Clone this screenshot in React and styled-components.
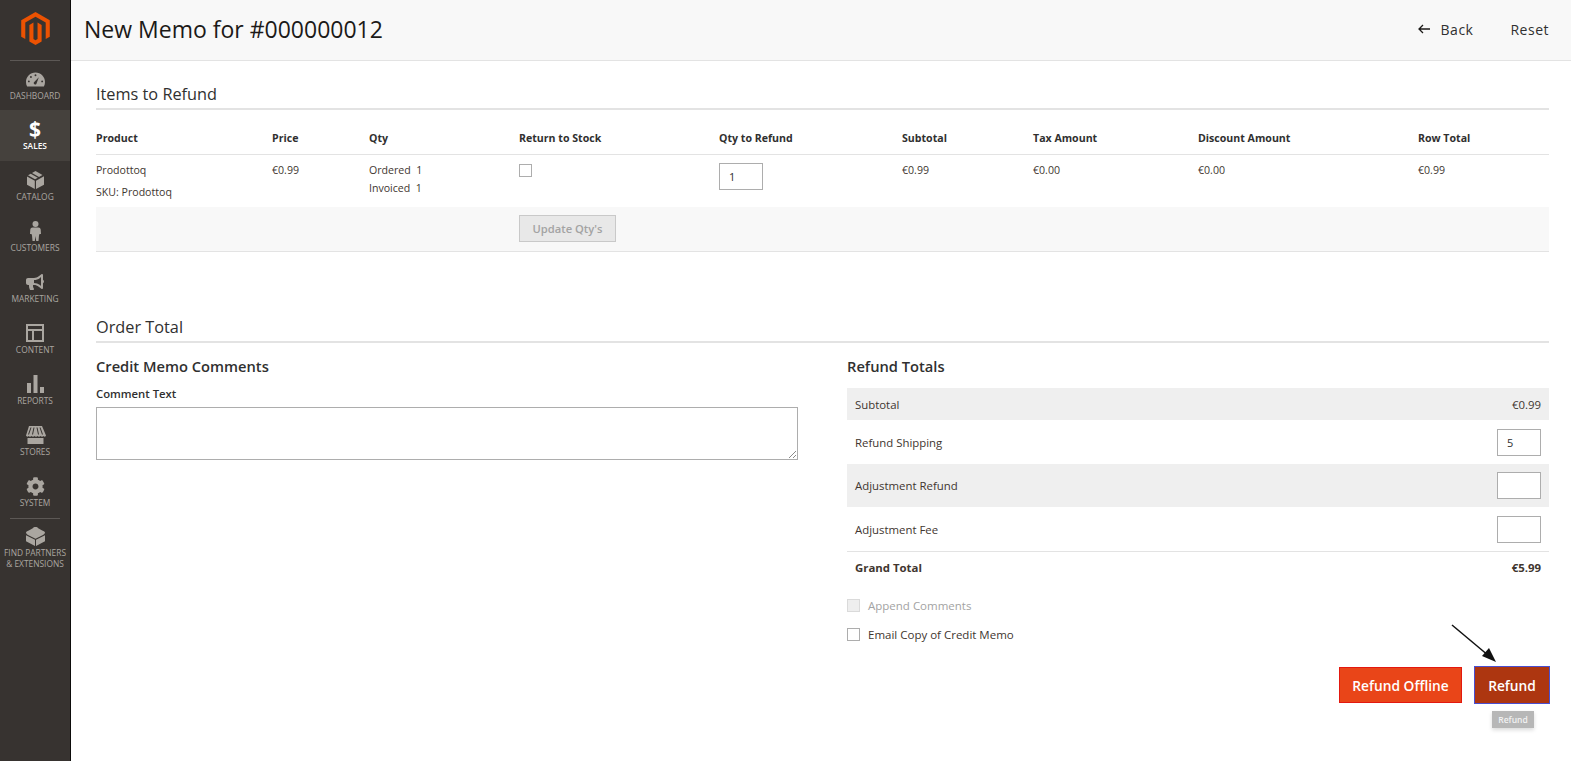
import React from 'react';
import styled, { createGlobalStyle } from 'styled-components';
import { SiMagento } from 'react-icons/si';
import { FaBullhorn, FaCog } from 'react-icons/fa';

const GlobalStyle = createGlobalStyle`
    html, body {
        margin: 0;
        padding: 0;
        background: #fff;
    }
    body {
        font-family: "Open Sans", "Liberation Sans", sans-serif;
        color: #303030;
        overflow: hidden;
    }
`;

const Page = styled.div`
    display: flex;
    height: 761px;
    position: relative;
`;

const Sidebar = styled.nav`
    width: 70px;
    flex: none;
    background: #373330;
    border-right: 1px solid #0d0c0b;
    display: flex;
    flex-direction: column;
    align-items: stretch;
`;

const LogoBox = styled.div`
    height: 60px;
    display: flex;
    justify-content: center;
    align-items: flex-start;
    padding-top: 12px;
    box-sizing: border-box;
    color: #eb5202;
    font-size: 33px;
    svg { display: block; }
`;

const Rule = styled.div`
    height: 1px;
    background: #5c5855;
    margin: 0 10px;
`;

const MenuItem = styled.a`
    height: ${p => p.$height || 51}px;
    box-sizing: border-box;
    display: flex;
    flex-direction: column;
    align-items: center;
    padding-top: ${p => p.$pad || 10}px;
    font-size: 8.4px;
    line-height: ${p => p.$leading || 12}px;
    text-align: center;
    white-space: nowrap;
    color: ${p => (p.$active ? '#ffffff' : '#aaa6a0')};
    background: ${p => (p.$active ? '#45413d' : 'transparent')};
    font-weight: ${p => (p.$active ? 600 : 400)};
`;

const IconSlot = styled.span`
    height: 18px;
    margin-bottom: 2px;
    display: flex;
    align-items: center;
    justify-content: center;
    color: #aaa6a0;
    svg { display: block; }
`;

const Dollar = styled.span`
    font-size: 21px;
    line-height: 18px;
    font-weight: 700;
    color: #fff;
`;

const Main = styled.main`
    flex: 1;
    min-width: 0;
    display: flex;
    flex-direction: column;
`;

const Header = styled.header`
    height: 61px;
    box-sizing: border-box;
    background: #f8f8f8;
    border-bottom: 1px solid #e3e3e3;
    display: flex;
    align-items: center;
    justify-content: space-between;
    padding: 0 22px 2px 13px;
`;

const Title = styled.h1`
    margin: 0;
    font-size: 23px;
    font-weight: 400;
    color: #1c1a18;
`;

const HeaderActions = styled.div`
    display: flex;
    align-items: center;
    gap: 37px;
`;

const HeaderLink = styled.span`
    display: flex;
    align-items: center;
    gap: 11px;
    font-size: 14px;
    color: #303030;
    letter-spacing: 0.5px;
`;

const Content = styled.div`
    padding: 0 22px 0 25px;
`;

const SectionTitle = styled.h2`
    margin: ${p => p.$top}px 0 0;
    height: 26px;
    font-size: 16.3px;
    line-height: 24px;
    font-weight: 400;
    color: #303030;
    border-bottom: 2px solid #e3e3e3;
    box-sizing: content-box;
`;

const columns = '176px 97px 150px 200px 183px 131px 165px 220px 1fr';

const TableHead = styled.div`
    display: grid;
    grid-template-columns: ${columns};
    height: 45px;
    box-sizing: border-box;
    align-items: center;
    padding-top: 12px;
    border-bottom: 1px solid #e3e3e3;
    font-size: 10.6px;
    font-weight: 700;
    color: #303030;
`;

const TableRow = styled.div`
    display: grid;
    grid-template-columns: ${columns};
    height: 52px;
    box-sizing: border-box;
    padding-top: 6px;
    font-size: 10.6px;
    line-height: 18px;
    color: #41362f;
`;

const Cell = styled.div`
    white-space: nowrap;
`;

const SkuLine = styled.div`
    margin-top: 4px;
`;

const Checkbox = styled.span`
    display: block;
    box-sizing: border-box;
    width: 13px;
    height: 13px;
    margin-top: ${p => p.$top || 0}px;
    flex: none;
    border: 1px solid ${p => (p.$disabled ? '#dadada' : '#adadad')};
    background: ${p => (p.$disabled ? '#eeeeee' : '#fff')};
`;

const NumberBox = styled.span`
    display: block;
    box-sizing: border-box;
    width: 44px;
    height: 27px;
    margin-top: ${p => p.$top || 0}px;
    padding: 0 9px;
    border: 1px solid #adadad;
    background: #fff;
    font-size: 11px;
    line-height: 25px;
    color: #303030;
`;

const TableFooter = styled.div`
    display: grid;
    grid-template-columns: ${columns};
    height: 45px;
    box-sizing: border-box;
    padding-bottom: 2px;
    background: #f8f8f8;
    border-bottom: 1px solid #e3e3e3;
    align-items: center;
`;

const DisabledButton = styled.span`
    grid-column: 4;
    width: 97px;
    height: 27px;
    box-sizing: border-box;
    border: 1px solid #c9c9c9;
    background: #e8e8e8;
    font-size: 11.2px;
    font-weight: 600;
    line-height: 25px;
    text-align: center;
    color: #a3a3a3;
`;

const Columns = styled.div`
    display: grid;
    grid-template-columns: 702px 702px;
    justify-content: space-between;
`;

const SubTitle = styled.h3`
    margin: 13px 0 12px;
    font-size: 14.7px;
    line-height: 20px;
    font-weight: 600;
    color: #303030;
`;

const FieldLabel = styled.div`
    font-size: 11.3px;
    font-weight: 600;
    line-height: 16px;
    color: #303030;
    margin-top: -2px;
    margin-bottom: 5px;
`;

const TextArea = styled.div`
    height: 53px;
    box-sizing: border-box;
    border: 1px solid #adadad;
    position: relative;
    svg { position: absolute; right: 1px; bottom: 1px; }
`;

const TotalRow = styled.div`
    height: ${p => p.$height}px;
    box-sizing: border-box;
    padding: 0 8px;
    display: flex;
    align-items: center;
    justify-content: space-between;
    background: ${p => (p.$shaded ? '#efefef' : 'transparent')};
    border-top: ${p => (p.$ruled ? '1px solid #e3e3e3' : 'none')};
    font-size: 11.4px;
    font-weight: ${p => (p.$bold ? 700 : 400)};
    color: #41362f;
`;

const CheckRow = styled.label`
    display: flex;
    align-items: center;
    gap: 8px;
    height: 29px;
    font-size: 11.5px;
    color: ${p => (p.$disabled ? '#a3a3a3' : '#41362f')};
`;

const CheckGroup = styled.div`
    margin-top: 9px;
`;

const Actions = styled.div`
    display: flex;
    justify-content: flex-end;
    align-items: center;
    gap: 12px;
    margin: 17px -1px 0 0;
`;

const ActionButton = styled.span`
    position: relative;
    box-sizing: border-box;
    height: ${p => (p.$focused ? 38 : 36)}px;
    width: ${p => (p.$focused ? 76 : 123)}px;
    background: ${p => (p.$focused ? '#ad3610' : '#e94518')};
    border: 1px solid ${p => (p.$focused ? '#4a4fd0' : '#e3190f')};
    font-size: 13.75px;
    font-weight: 600;
    color: #fff;
    display: flex;
    align-items: center;
    justify-content: center;
`;

const Tooltip = styled.span`
    position: absolute;
    top: 44px;
    left: 17px;
    width: 42px;
    height: 17px;
    background: #b7b7b7;
    box-shadow: 0 2px 4px rgba(0, 0, 0, 0.15);
    color: #f2f2f2;
    font-size: 8.5px;
    font-weight: 600;
    line-height: 17px;
    text-align: center;
`;

const ArrowOverlay = styled.svg`
    position: absolute;
    left: 1445px;
    top: 620px;
`;

const GaugeIcon = () => (
    <svg width="19" height="15" viewBox="0 0 20 15" fill="currentColor">
        <path d="M10 0C4.500 0 0 4.400 0 10c0 1.800.4 3.400 1.200 4.800h17.600c.8-1.400 1.200-3 1.200-4.800C20 4.400 15.500 0 10 0zM3 10.500a1 1 0 1 1 0-2 1 1 0 0 1 0 2zm2.200-4.600a1 1 0 1 1 0-2 1 1 0 0 1 0 2zM10 4a1 1 0 1 1 0-2 1 1 0 0 1 0 2zm.9 8.300a1.600 1.600 0 0 1-2.700-1.600L13.500 5zM17 10.500a1 1 0 1 1 0-2 1 1 0 0 1 0 2z" fillRule="evenodd" />
    </svg>
);

const BoxIcon = () => (
    <svg width="17" height="18" viewBox="0 0 17 18" fill="currentColor">
        <path d="M8.500 0 5 2l7 4 3.500-2zM3.700 2.800 1 4.300l7 4 2.800-1.600zM0 5.500v8.200L7.800 18V9.700zM17 5.200l-8 4.500V18l8-4.300z" />
    </svg>
);

const PersonIcon = () => (
    <svg width="11" height="20" viewBox="0 0 11 20" fill="currentColor">
        <circle cx="5.500" cy="3" r="3" />
        <path d="M2.500 6.500h6c1.200 0 2 .8 2.200 2l.3 4.500H9.500l-.5 1.500L8.500 20H6.200l-.7-5-.7 5H2.500L2 14.500 1.500 13H0l.3-4.500c.2-1.200 1-2 2.200-2z" />
    </svg>
);

const LayoutIcon = () => (
    <svg width="18" height="18" viewBox="0 0 18 18" fill="currentColor">
        <path fillRule="evenodd" d="M0 0h18v18H0zM2 2v3h14V2zM2 7v9h4V7zM8 7v9h8V7z" />
    </svg>
);

const BarsIcon = () => (
    <svg width="17" height="18" viewBox="0 0 17 18" fill="currentColor">
        <path d="M0 8h4v10H0zM6.500 0h4v18h-4zM13 12h4v6h-4z" />
    </svg>
);

const StoreIcon = () => (
    <svg width="21" height="18" viewBox="0 0 21 18" fill="currentColor">
        <path fillRule="evenodd" d="M4 0h13l4 9.500c-.5 1.500-2 1.500-2.500.5-.6 1-2.400 1-3 0-.6 1-2.400 1-3 0-.6 1-2.400 1-3 0-.6 1-2.400 1-3 0-.6 1-2.400 1-3 0-.5 1-2 1-2.500-.5zM5.500 1.500 3 8.500h1l2.500-7zM8.500 1.500 7 8.500h1l1.500-7zM11.500 1.500 13 8.500h1l-1.500-7zM14.500 1.500 17 8.500h1l-2.500-7z" />
        <path d="M2.500 12h16v6h-16z" />
    </svg>
);

const BrickIcon = () => (
    <svg width="19" height="19" viewBox="0 0 19 19" fill="currentColor">
        <path d="M9.500 0c1.500 0 2.700.6 2.700 1.300l4 2.200c1.700.5 2.800 1.300 2.800 2.200 0 1-2 2.400-4 3.300l-5.500 2.700-5.500-2.700C2 8.100 0 6.700 0 5.700c0-.9 1.100-1.700 2.800-2.200l4-2.200C6.800.6 8 0 9.500 0z" />
        <path d="M0 8.200l9 4.500V19l-9-4.700zM19 8.200l-9 4.500V19l9-4.700z" />
    </svg>
);

const menu = [
    { label: 'DASHBOARD', icon: <GaugeIcon />, height: 49, pad: 9 },
    { label: 'SALES', icon: <Dollar>$</Dollar>, active: true },
    { label: 'CATALOG', icon: <BoxIcon /> },
    { label: 'CUSTOMERS', icon: <PersonIcon /> },
    { label: 'MARKETING', icon: <FaBullhorn size={18} /> },
    { label: 'CONTENT', icon: <LayoutIcon /> },
    { label: 'REPORTS', icon: <BarsIcon /> },
    { label: 'STORES', icon: <StoreIcon /> },
    { label: 'SYSTEM', icon: <FaCog size={19} /> },
];

const App = () => (
    <Page>
        <GlobalStyle />
        <Sidebar>
            <LogoBox><SiMagento /></LogoBox>
            <Rule />
            {menu.map(item => (
                <MenuItem key={item.label} $active={item.active} $height={item.height} $pad={item.pad}>
                    <IconSlot>{item.icon}</IconSlot>
                    {item.label}
                </MenuItem>
            ))}
            <Rule />
            <MenuItem $pad={8} $leading={11}>
                <IconSlot><BrickIcon /></IconSlot>
                FIND PARTNERS<br />&amp; EXTENSIONS
            </MenuItem>
        </Sidebar>
        <Main>
            <Header>
                <Title>New Memo for #000000012</Title>
                <HeaderActions>
                    <HeaderLink>
                        <svg width="12" height="10" viewBox="0 0 12 10" fill="none" stroke="#1c1a18" strokeWidth="1.300">
                            <path d="M12 5H1M5 1 1 5l4 4" />
                        </svg>
                        Back
                    </HeaderLink>
                    <HeaderLink>Reset</HeaderLink>
                </HeaderActions>
            </Header>
            <Content>
                <SectionTitle $top={21}>Items to Refund</SectionTitle>
                <TableHead>
                    <Cell>Product</Cell>
                    <Cell>Price</Cell>
                    <Cell>Qty</Cell>
                    <Cell>Return to Stock</Cell>
                    <Cell>Qty to Refund</Cell>
                    <Cell>Subtotal</Cell>
                    <Cell>Tax Amount</Cell>
                    <Cell>Discount Amount</Cell>
                    <Cell>Row Total</Cell>
                </TableHead>
                <TableRow>
                    <Cell>Prodottoq<SkuLine>SKU: Prodottoq</SkuLine></Cell>
                    <Cell>€0.99</Cell>
                    <Cell>Ordered&nbsp; 1<br />Invoiced&nbsp; 1</Cell>
                    <Cell><Checkbox $top={3} /></Cell>
                    <Cell><NumberBox $top={2}>1</NumberBox></Cell>
                    <Cell>€0.99</Cell>
                    <Cell>€0.00</Cell>
                    <Cell>€0.00</Cell>
                    <Cell>€0.99</Cell>
                </TableRow>
                <TableFooter>
                    <DisabledButton>Update Qty's</DisabledButton>
                </TableFooter>
                <SectionTitle $top={63}>Order Total</SectionTitle>
                <Columns>
                    <div>
                        <SubTitle>Credit Memo Comments</SubTitle>
                        <FieldLabel>Comment Text</FieldLabel>
                        <TextArea>
                            <svg width="8" height="8" viewBox="0 0 8 8" stroke="#8a8a8a" strokeWidth="1">
                                <path d="M1 8l7-7M5 8l3-3" />
                            </svg>
                        </TextArea>
                    </div>
                    <div>
                        <SubTitle>Refund Totals</SubTitle>
                        <TotalRow $height={32} $shaded><span>Subtotal</span><span>€0.99</span></TotalRow>
                        <TotalRow $height={44}><span>Refund Shipping</span><NumberBox>5</NumberBox></TotalRow>
                        <TotalRow $height={43} $shaded><span>Adjustment Refund</span><NumberBox /></TotalRow>
                        <TotalRow $height={44}><span>Adjustment Fee</span><NumberBox /></TotalRow>
                        <TotalRow $height={31} $ruled $bold><span>Grand Total</span><span>€5.99</span></TotalRow>
                        <CheckGroup>
                            <CheckRow $disabled><Checkbox $disabled />Append Comments</CheckRow>
                            <CheckRow><Checkbox />Email Copy of Credit Memo</CheckRow>
                        </CheckGroup>
                        <Actions>
                            <ActionButton>Refund Offline</ActionButton>
                            <ActionButton $focused>
                                Refund
                                <Tooltip>Refund</Tooltip>
                            </ActionButton>
                        </Actions>
                    </div>
                </Columns>
            </Content>
        </Main>
        <ArrowOverlay width="60" height="50" viewBox="0 0 60 50">
            <path d="M7 5 44 36" stroke="#111" strokeWidth="1.500" />
            <path d="M51 42 37 36 44 28z" fill="#111" />
        </ArrowOverlay>
    </Page>
);

export default App;
